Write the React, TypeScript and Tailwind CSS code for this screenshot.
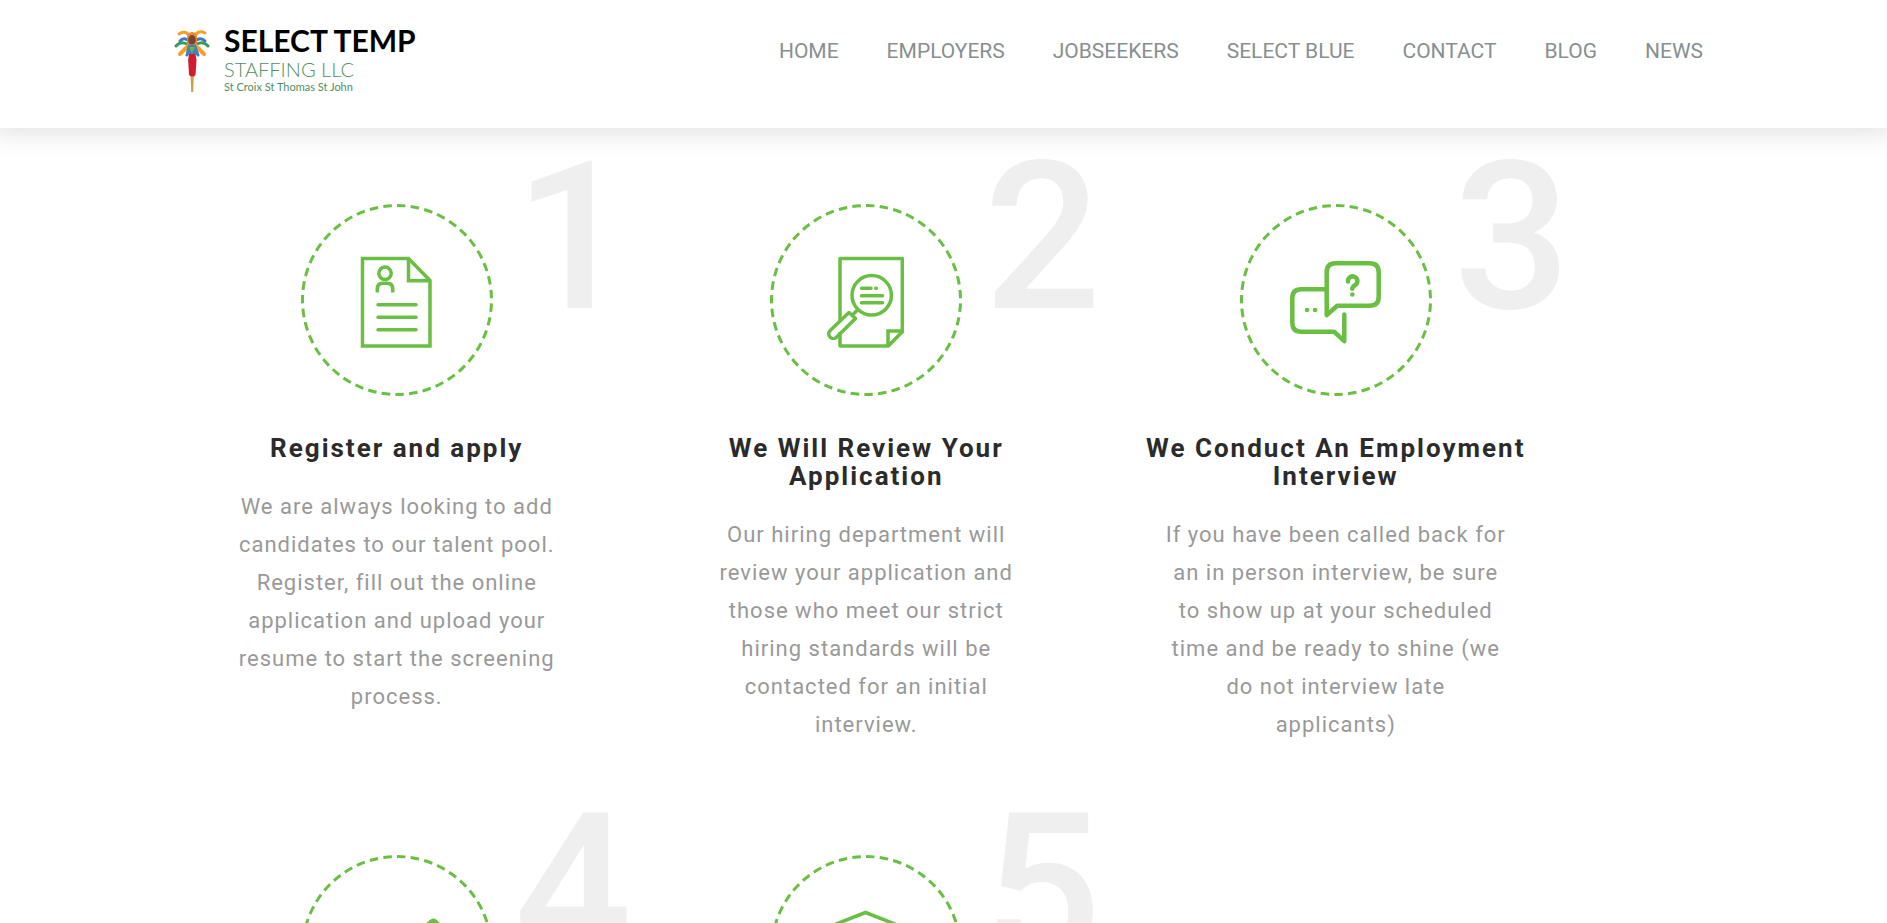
import type { ReactNode } from "react"

const links = [
  "HOME",
  "EMPLOYERS",
  "JOBSEEKERS",
  "SELECT BLUE",
  "CONTACT",
  "BLOG",
  "NEWS",
]

const ResumeIcon = () => (
  <g strokeWidth="3.5">
    <path d="M61.500 54.500h46l21.500 22V142H61.500z" />
    <path d="M107.500 54.500v22.200H129" />
    <circle cx="84" cy="69.300" r="6.200" />
    <path d="M76.300 88.500v-3.500q0-5.700 5.700-5.700h4q5.700 0 5.700 5.700v3.500" />
    <path d="M77 100.700h38M77 113.300h38M77 125.700h38" strokeLinecap="round" />
  </g>
)

const ReviewIcon = () => (
  <g strokeWidth="3.5" transform="translate(1 0)">
    <path d="M69 117V54.500h62.300v73.200L117.300 142H69v-14" strokeLinejoin="round" />
    <path d="M117 141v-14h14" />
    <circle cx="100.700" cy="91.300" r="19.700" />
    <path
      d="M90.500 84.300h9.500M104.700 84.300h.6M90.500 91.700h21M90.500 98.700h21"
      strokeLinecap="round"
    />
    <path d="M87 105.500l-5.500 5.500" />
    <path d="M78 108.500l6.500 6L65.500 133.200a4.600 4.600 0 0 1-6.600-6.400z" strokeLinejoin="round" />
  </g>
)

const InterviewIcon = () => (
  <g strokeWidth="4.500" strokeLinecap="round" strokeLinejoin="round">
    <path d="M86.700 111V68.300q0-9 9-9h34q9 0 9 9v24.400q0 9-9 9H97.300z" />
    <path d="M85 85.300H61.300q-9 0-9 9v24.400q0 9 9 9H94l10.300 9.500v-26.700" />
    <path d="M67 106h.1M75 106h.1M112.300 90.500h.1" />
    <path d="M108 77.500a4.700 4.700 0 1 1 7.700 3.200q-3.400 2-3.400 4" />
  </g>
)

const PencilIcon = () => (
  <g strokeWidth="3.5" strokeLinejoin="round">
    <path
      d="M127 69l3-2.700q2.300-2 4.600 0l6 5.700q2 2.300 0 4.600l-3 3z"
      className="fill-[#69bf42]"
    />
    <path d="M127 69L72 122l-5 16 16-5 54.600-53.400z" />
  </g>
)

const BoxIcon = () => (
  <g strokeWidth="3.500" strokeLinejoin="round">
    <path d="M95.500 57.500L135 73v46l-39.500 18L56 119V73z" />
    <path d="M56 73l39.500 16L135 73M95.500 89v48" />
  </g>
)

type StepProps = {
  number: number
  icon: ReactNode
  title?: string
  text?: string
}

const steps: StepProps[] = [
  {
    number: 1,
    icon: <ResumeIcon />,
    title: "Register and apply",
    text: "We are always looking to add candidates to our talent pool. Register, fill out the online application and upload your resume to start the screening process.",
  },
  {
    number: 2,
    icon: <ReviewIcon />,
    title: "We Will Review Your Application",
    text: "Our hiring department will review your application and those who meet our strict hiring standards will be contacted for an initial interview.",
  },
  {
    number: 3,
    icon: <InterviewIcon />,
    title: "We Conduct An Employment Interview",
    text: "If you have been called back for an in person interview, be sure to show up at your scheduled time and be ready to shine (we do not interview late applicants)",
  },
  { number: 4, icon: <PencilIcon /> },
  { number: 5, icon: <BoxIcon /> },
]

function Logo() {
  return (
    <a href="#" className="flex gap-[14px]">
      <svg viewBox="0 0 36 66" className="mt-[6px] h-[66px] w-9" fill="none">
        <g strokeWidth="3" strokeLinecap="round">
          <path d="M17 10Q12 1 5 6M19 10Q24 1 31 5" stroke="#f6a02c" />
          <path d="M16 14Q10 8 6 13M20 14Q26 8 31 13" stroke="#3f78c4" />
          <path d="M15 17Q7 12 2 18M21 17Q29 12 34 18" stroke="#3c9a59" />
          <path d="M14 18L6 26M22 18L30 26" stroke="#f6a02c" strokeWidth="4" />
          <path d="M15 19L13 27M21 19L24 27" stroke="#3f78c4" />
        </g>
        <path d="M13 10q0-6 5-6t5 6v6H13z" fill="#ef8a2a" />
        <ellipse cx="18" cy="12" rx="3.800" ry="5" fill="#7a4436" />
        <path d="M14 17h8l2 10H12z" fill="#4b7fb8" />
        <path d="M15 19l3 6 3-6z" fill="#65b948" />
        <path d="M15 26h6.500l1 6-1 15q-3.200 4-6.400 0l-1-15z" fill="#d01c2e" />
        <path d="M16.600 48.500h3.200l-.6 15.500h-2z" fill="#c9a24a" />
      </svg>
      <span className="flex flex-col font-[Lato,sans-serif] text-[#4f8f63]">
        <span className="text-[30px] leading-9 font-bold text-black">SELECT TEMP</span>
        <span className="text-[20px] leading-[22px] font-light">STAFFING LLC</span>
        <span className="text-[11px] leading-[14px]">St Croix St Thomas St John</span>
      </span>
    </a>
  )
}

function Step({ number, icon, title, text }: StepProps) {
  return (
    <article className="relative flex min-h-[651px] w-[30%] flex-col items-center pt-[76px] text-center">
      <span className="absolute top-[7px] right-0 text-[206px] leading-[206px] font-medium text-[#efefef]">
        {number}
      </span>
      <svg viewBox="0 0 192 192" className="relative size-48 stroke-[#69bf42]" fill="none">
        <circle
          cx="96"
          cy="96"
          r="94.500"
          strokeWidth="3"
          pathLength="43"
          strokeDasharray="0.62 0.38"
          transform="rotate(-90 96 96)"
        />
        {icon}
      </svg>
      {title && (
        <h2 className="mt-[38px] max-w-[400px] text-[26px] leading-7 font-bold tracking-[2px] text-[#2b2b2b]">
          {title}
        </h2>
      )}
      {text && (
        <p className="mt-[26px] max-w-[342px] text-[22px] leading-[38px] tracking-[1px] text-[#999]">
          {text}
        </p>
      )}
    </article>
  )
}

export default function App() {
  return (
    <div className="h-screen overflow-hidden bg-white font-[Roboto,sans-serif]">
      <header className="relative z-10 flex h-32 items-start justify-between bg-white pt-[22px] pr-[184px] pl-[174px] shadow-[0_-8px_30px_10px_rgba(0,0,0,0.14)]">
        <Logo />
        <nav className="flex gap-12 pt-[15px] text-[21px] leading-7 text-[#888f8f]">
          {links.map((link) => (
            <a key={link} href="#">
              {link}
            </a>
          ))}
        </nav>
      </header>
      <main className="flex flex-wrap pr-[160px] pl-[162px]">
        {steps.map((step) => (
          <Step key={step.number} {...step} />
        ))}
      </main>
    </div>
  )
}
